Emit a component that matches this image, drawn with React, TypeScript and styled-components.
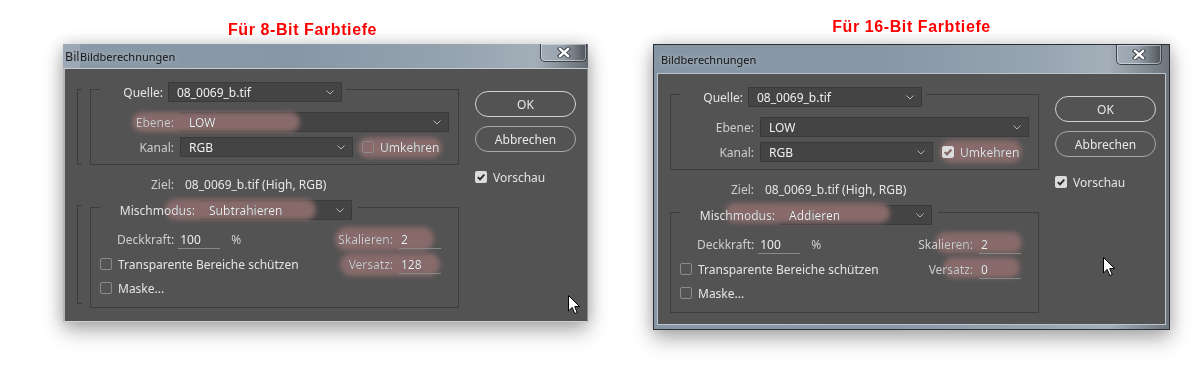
import React from "react";
import styled, { createGlobalStyle, css } from "styled-components";

const Global = createGlobalStyle`
  html, body { margin: 0; padding: 0; background: #ffffff; }
  body { font-family: "Noto Sans", "Open Sans", sans-serif; }
`;

const Page = styled.div`
  width: 1200px;
  height: 375px;
  overflow: hidden;
  box-sizing: border-box;
  display: flex;
  align-items: flex-start;
  gap: 65px;
  padding-left: 63px;
  background: #ffffff;
`;

const Column = styled.div<{ $w: number }>`
  width: ${(p) => p.$w}px;
  display: flex;
  flex-direction: column;
`;

const Caption = styled.div<{ $top: number; $shift: number; $gap: number }>`
  margin-top: ${(p) => p.$top}px;
  margin-bottom: ${(p) => p.$gap}px;
  padding-right: ${(p) => p.$shift}px;
  height: 18px;
  line-height: 18px;
  font: bold 16px "Liberation Sans", Arial, sans-serif;
  letter-spacing: 0.6px;
  color: #ff0000;
  text-align: center;
`;

const Window = styled.div<{ $aero?: boolean }>`
  display: flex;
  flex-direction: column;
  box-sizing: border-box;
  box-shadow: 0 9px 20px rgba(0, 0, 0, 0.3), 0 0 14px rgba(0, 0, 0, 0.16);
  ${(p) =>
    p.$aero
      ? css`
          width: 517px;
          height: 286px;
          border: 1px solid #2b2e32;
          padding: 0 3px 4px;
          background: linear-gradient(90deg, #8796a4 0%, #8797a6 45%, #97a5b1 75%, #a4afb9 88%, #6d747b 100%);
        `
      : css`
          width: 525px;
          height: 278px;
          background: linear-gradient(90deg, #8a99a8 0%, #8797a6 45%, #96a4b0 75%, #a3aeb8 90%, #656b72 100%);
        `}
`;

const TitleBar = styled.div<{ $h: number }>`
  height: ${(p) => p.$h}px;
  flex: none;
  display: flex;
  align-items: flex-start;
`;

const Ghost = styled.span`
  align-self: stretch;
  width: 15px;
  padding-left: 2px;
  overflow: hidden;
  white-space: nowrap;
  display: flex;
  align-items: center;
  background: rgba(190, 198, 206, 0.35);
  font-size: 12.5px;
  color: #1b1b1b;
`;

const TitleText = styled.span<{ $pad: number }>`
  align-self: center;
  padding-left: ${(p) => p.$pad}px;
  font-size: 11px;
  color: #141414;
  text-shadow: 0 0 6px rgba(255, 255, 255, 0.45);
`;

const CloseBtn = styled.div<{ $w: number; $h: number; $r: number }>`
  margin-left: auto;
  margin-right: ${(p) => p.$r}px;
  width: ${(p) => p.$w}px;
  height: ${(p) => p.$h}px;
  box-sizing: border-box;
  border: 1px solid #3d4247;
  border-top: none;
  border-radius: 0 0 5px 5px;
  background: linear-gradient(90deg, #a2adb8 0%, #98a3ae 45%, #6c737a 80%, #4f5459 100%);
  box-shadow: inset 0 0 0 1px rgba(230, 236, 242, 0.55);
  display: flex;
  align-items: center;
  justify-content: center;
`;

const Body = styled.div<{ $aero?: boolean }>`
  position: relative;
  flex: 1;
  box-sizing: border-box;
  background: #535353;
  display: flex;
  align-items: flex-start;
  padding-left: 12px;
  font-size: 12px;
  color: #d2d2d2;
  ${(p) =>
    p.$aero
      ? css`
          border: 1px solid #b9c4ce;
        `
      : css`
          border-left: 2px solid #b4b8bc;
          border-top: 1px solid #c3ccd4;
          border-right: 1px solid #8d8d8d;
          border-bottom: 1px solid #cfcfcf;
        `}
`;

const GhostCol = styled.div`
  width: 5px;
  margin: 20px 8px 0 0;
  display: flex;
  flex-direction: column;
  gap: 40px;
`;

const Bracket = styled.div<{ $h: number }>`
  height: ${(p) => p.$h}px;
  border: 1px solid #3b3b3b;
  border-right: none;
`;

const Main = styled.div`
  width: 369px;
  margin-top: 20px;
  display: flex;
  flex-direction: column;
`;

const Group = styled.div<{ $pb: number; $mt?: number }>`
  box-sizing: border-box;
  border: 1px solid #3c3c3c;
  margin-top: ${(p) => p.$mt ?? 0}px;
  padding-bottom: ${(p) => p.$pb}px;
  display: flex;
  flex-direction: column;
  align-items: flex-start;
`;

const HeaderRow = styled.div<{ $pr: number }>`
  margin: -8px 0 0 9px;
  padding-right: ${(p) => p.$pr}px;
  background: #535353;
  display: flex;
  align-items: center;
  gap: 5px;
`;

const Row = styled.div<{ $mt: number; $gap?: number; $h?: number }>`
  margin-top: ${(p) => p.$mt}px;
  height: ${(p) => p.$h ?? 20}px;
  display: flex;
  align-items: center;
  gap: ${(p) => p.$gap ?? 6}px;
`;

const ParamRow = styled.div<{ $mt: number; $pl: number }>`
  margin-top: ${(p) => p.$mt}px;
  height: 20px;
  width: 100%;
  box-sizing: border-box;
  padding: 0 17px 0 ${(p) => p.$pl}px;
  display: flex;
  align-items: center;
  justify-content: space-between;
`;

const Pair = styled.div<{ $gap: number }>`
  display: flex;
  align-items: center;
  gap: ${(p) => p.$gap}px;
`;

const Label = styled.span<{ $w?: number; $bright?: boolean }>`
  ${(p) =>
    p.$w
      ? css`
          width: ${p.$w}px;
          text-align: right;
        `
      : ""}
  flex: none;
  white-space: nowrap;
  color: ${(p) => (p.$bright ? "#e4e4e4" : "#cdcdcd")};
`;

const Value = styled.span`
  color: #e6e6e6;
  white-space: nowrap;
`;

const Select = styled.div<{ $w: number }>`
  width: ${(p) => p.$w}px;
  height: 20px;
  flex: none;
  box-sizing: border-box;
  background: #444444;
  border: 1px solid #3a3a3a;
  display: flex;
  align-items: center;
  justify-content: space-between;
  padding: 0 7px 0 8px;
  color: #efefef;
`;

const NumField = styled.span`
  width: 42px;
  height: 19px;
  align-self: flex-start;
  box-sizing: border-box;
  border-bottom: 1px solid #888888;
  padding-left: 2px;
  line-height: 19px;
  color: #efefef;
`;

const Check = styled.span<{ $on?: boolean }>`
  width: 12px;
  height: 12px;
  flex: none;
  box-sizing: border-box;
  border-radius: 2px;
  display: inline-flex;
  align-items: center;
  justify-content: center;
  ${(p) =>
    p.$on
      ? css`
          background: #dcdcdc;
        `
      : css`
          border: 1px solid #8b8b8b;
        `}
`;

const Side = styled.div`
  width: 101px;
  margin: 22px 0 0 16px;
  display: flex;
  flex-direction: column;
`;

const Button = styled.div<{ $default?: boolean; $mt?: number }>`
  height: 26px;
  margin-top: ${(p) => p.$mt ?? 0}px;
  box-sizing: border-box;
  border-radius: 13px;
  border: 1px solid ${(p) => (p.$default ? "#d2d2d2" : "#a9a9a9")};
  display: flex;
  align-items: center;
  justify-content: center;
  color: #e8e8e8;
  font-size: 12px;
`;

const Highlight = styled.span`
  position: absolute;
  z-index: 3;
  pointer-events: none;
  border-radius: 12px;
  background: #886a6a;
  filter: blur(2.5px);
  mix-blend-mode: lighten;
`;

const Cursor = styled.svg`
  position: absolute;
  z-index: 4;
`;

const Chevron = () => (
  <svg width="8" height="5" viewBox="0 0 8 5">
    <polyline points="0.5,0.5 4,4 7.5,0.5" fill="none" stroke="#b5b5b5" strokeWidth="1" />
  </svg>
);

const Tick = () => (
  <svg width="10" height="10" viewBox="0 0 10 10">
    <path d="M1.8 5.2 L4 7.4 L8.3 2.6" fill="none" stroke="#2a2a2a" strokeWidth="1.9" />
  </svg>
);

const CloseX = () => (
  <svg width="14" height="11" viewBox="0 0 14 11">
    <path d="M3 2 L11 9 M11 2 L3 9" stroke="#33383d" strokeWidth="4.2" strokeLinecap="square" />
    <path d="M3 2 L11 9 M11 2 L3 9" stroke="#ffffff" strokeWidth="2.4" strokeLinecap="square" />
  </svg>
);

type Box = { x: number; y: number; w: number; h: number };

type DialogProps = {
  aero?: boolean;
  mode: string;
  invert: boolean;
  offset: string;
  highlights: Box[];
  cursor: { x: number; y: number };
};

const Dialog: React.FC<DialogProps> = ({ aero, mode, invert, offset, highlights, cursor }) => (
  <Window $aero={aero}>
    <TitleBar $h={aero ? 28 : 24}>
      {!aero && <Ghost>Bil</Ghost>}
      <TitleText $pad={aero ? 4 : 0}>Bildberechnungen</TitleText>
      <CloseBtn $w={aero ? 46 : 47} $h={aero ? 20 : 18} $r={aero ? 4 : 1}>
        <CloseX />
      </CloseBtn>
    </TitleBar>
    <Body $aero={aero}>
      {!aero && (
        <GhostCol>
          <Bracket $h={74} />
          <Bracket $h={97} />
        </GhostCol>
      )}
      <Main>
        <Group $pb={7}>
          <HeaderRow $pr={4}>
            <Label $w={63} $bright>Quelle:</Label>
            <Select $w={174}>
              <span>08_0069_b.tif</span>
              <Chevron />
            </Select>
          </HeaderRow>
          <Row $mt={10}>
            <Label $w={83}>Ebene:</Label>
            <Select $w={269}>
              <span>LOW</span>
              <Chevron />
            </Select>
          </Row>
          <Row $mt={5}>
            <Label $w={83}>Kanal:</Label>
            <Select $w={173}>
              <span>RGB</span>
              <Chevron />
            </Select>
            <Check $on={invert} style={{ marginLeft: 3 }}>
              {invert && <Tick />}
            </Check>
            <Label $bright>Umkehren</Label>
          </Row>
        </Group>
        <Row $mt={10} $h={18} $gap={11}>
          <Label $w={84}>Ziel:</Label>
          <Value>08_0069_b.tif (High, RGB)</Value>
        </Row>
        <Group $pb={9} $mt={14}>
          <HeaderRow $pr={6}>
            <Label $w={95} $bright>Mischmodus:</Label>
            <Select $w={152}>
              <span>{mode}</span>
              <Chevron />
            </Select>
          </HeaderRow>
          <ParamRow $mt={9} $pl={26}>
            <Pair $gap={4}>
              <Label>Deckkraft:</Label>
              <NumField>100</NumField>
              <Label style={{ marginLeft: 7 }}>%</Label>
            </Pair>
            <Pair $gap={6}>
              <Label>Skalieren:</Label>
              <NumField>2</NumField>
            </Pair>
          </ParamRow>
          <ParamRow $mt={5} $pl={9}>
            <Pair $gap={6}>
              <Check />
              <Label $bright>Transparente Bereiche schützen</Label>
            </Pair>
            <Pair $gap={6}>
              <Label>Versatz:</Label>
              <NumField>{offset}</NumField>
            </Pair>
          </ParamRow>
          <ParamRow $mt={4} $pl={9}>
            <Pair $gap={6}>
              <Check />
              <Label $bright>Maske...</Label>
            </Pair>
          </ParamRow>
        </Group>
      </Main>
      <Side>
        <Button $default>OK</Button>
        <Button $mt={9}>Abbrechen</Button>
        <Row $mt={18} $h={14} $gap={6}>
          <Check $on>
            <Tick />
          </Check>
          <Label $bright>Vorschau</Label>
        </Row>
      </Side>
      {highlights.map((h, i) => (
        <Highlight key={i} style={{ left: h.x, top: h.y, width: h.w, height: h.h }} />
      ))}
      <Cursor width="13" height="20" viewBox="0 0 13 20" style={{ left: cursor.x, top: cursor.y }}>
        <path d="M0.5 0.5 L0.5 16 L4.2 12.4 L6.8 18.6 L9.2 17.6 L6.7 11.6 L11.6 11.6 Z" fill="#ffffff" stroke="#000000" strokeWidth="1" />
      </Cursor>
    </Body>
  </Window>
);

const leftHighlights: Box[] = [
  { x: 67, y: 43, w: 168, h: 20 },
  { x: 293, y: 68, w: 84, h: 21 },
  { x: 100, y: 130, w: 151, h: 21 },
  { x: 270, y: 158, w: 99, h: 24 },
  { x: 275, y: 184, w: 100, h: 23 },
];

const rightHighlights: Box[] = [
  { x: 282, y: 66, w: 82, h: 23 },
  { x: 67, y: 129, w: 165, h: 20 },
  { x: 277, y: 158, w: 87, h: 21 },
  { x: 285, y: 183, w: 77, h: 21 },
];

export default function App() {
  return (
    <>
      <Global />
      <Page>
        <Column $w={525}>
          <Caption $top={21} $shift={46} $gap={5}>
            Für 8-Bit Farbtiefe
          </Caption>
          <Dialog
            mode="Subtrahieren"
            invert={false}
            offset="128"
            highlights={leftHighlights}
            cursor={{ x: 503, y: 226 }}
          />
        </Column>
        <Column $w={517}>
          <Caption $top={18} $shift={0} $gap={8}>
            Für 16-Bit Farbtiefe
          </Caption>
          <Dialog
            aero
            mode="Addieren"
            invert
            offset="0"
            highlights={rightHighlights}
            cursor={{ x: 445, y: 183 }}
          />
        </Column>
      </Page>
    </>
  );
}
